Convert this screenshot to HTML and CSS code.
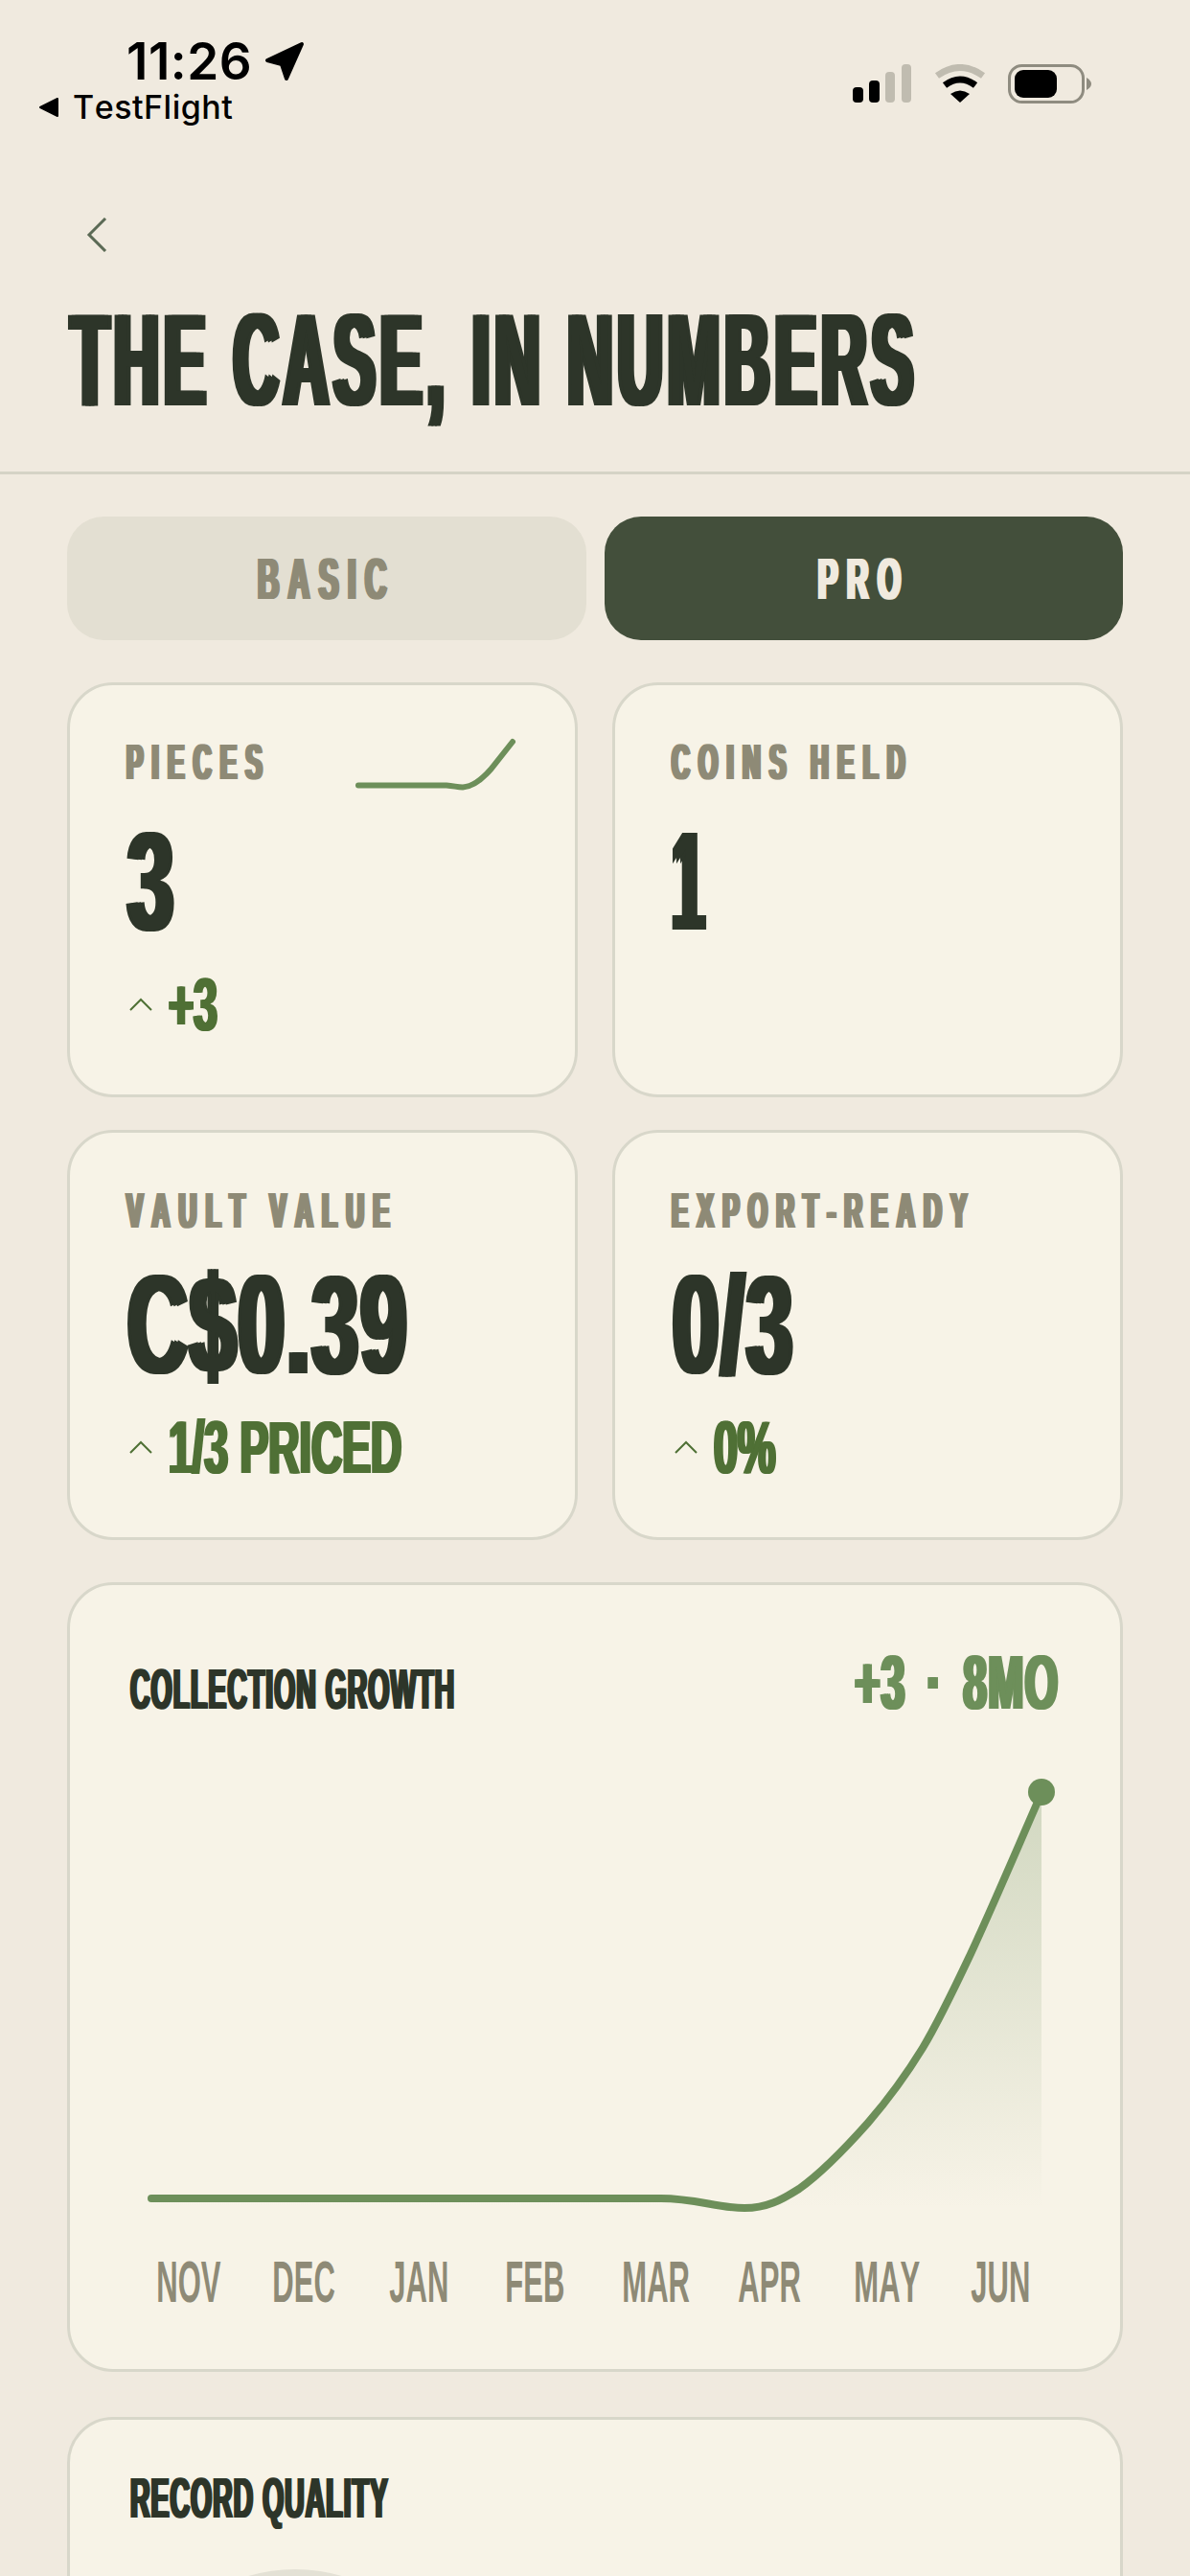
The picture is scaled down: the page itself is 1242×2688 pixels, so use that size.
FILE: index.html
```html
<!DOCTYPE html>
<html lang="en">

<head>
    <meta charset="UTF-8">
    <meta name="viewport" content="width=device-width, initial-scale=1.0">
    <title>The case, in numbers</title>
    <link rel="stylesheet" href="styles.css">
</head>

<body>
    <div class="status">
        <div class="status-left">
            <div class="clock">
                <span class="time">11:26</span>
                <svg class="arrow" width="42" height="42" viewBox="0 0 42 42">
                    <path d="M3 20 L39 3 L23 39 L18 24 Z" fill="#000" stroke="#000" stroke-width="4" stroke-linejoin="round" />
                </svg>
            </div>
            <div class="back-app">
                <svg width="22" height="22" viewBox="0 0 22 22">
                    <path d="M2 11 L20 2 V20 Z" fill="#000" stroke="#000" stroke-width="2" stroke-linejoin="round" />
                </svg>
                <span>TestFlight</span>
            </div>
        </div>
        <div class="status-right">
            <svg width="62" height="40" viewBox="0 0 62 40">
                <rect x="0" y="24" width="11" height="16" rx="4" fill="#000" />
                <rect x="17" y="17" width="11" height="23" rx="4" fill="#000" />
                <rect x="34" y="8" width="10" height="32" rx="4" fill="#c0bcb0" />
                <rect x="51" y="0" width="10" height="40" rx="4" fill="#c0bcb0" />
            </svg>
            <svg width="54" height="40" viewBox="0 0 54 40">
                <path d="M3 12 Q27 -5 51 12" fill="none" stroke="#c0bcb0" stroke-width="7" />
                <path d="M11 22 Q27 10 43 22" fill="none" stroke="#000" stroke-width="7" />
                <path d="M17 31 Q27 24 37 31 L27 40 Z" fill="#000" />
            </svg>
            <svg width="87" height="42" viewBox="0 0 87 42">
                <rect x="1.5" y="1.5" width="77" height="38" rx="13" fill="none" stroke="#8f8c80" stroke-width="3" />
                <rect x="7" y="6" width="44" height="29" rx="9" fill="#000" />
                <path d="M82 14 Q87 17 87 20.5 Q87 24 82 27 Z" fill="#8f8c80" />
            </svg>
        </div>
    </div>

    <header class="top">
        <svg class="back" width="22" height="36" viewBox="0 0 22 36">
            <path d="M20 1 L3 18 L20 35" fill="none" stroke="#5b6a55" stroke-width="3" />
        </svg>
        <h1 class="title">THE CASE, IN NUMBERS</h1>
    </header>

    <main class="content">
        <div class="tabs">
            <div class="tab"><span>BASIC</span></div>
            <div class="tab active"><span>PRO</span></div>
        </div>

        <div class="stats">
            <div class="card">
                <div class="label-row">
                    <div class="label">PIECES</div>
                    <svg class="spark" width="170" height="56" viewBox="370 770 170 56">
                        <path d="M374 819.5 H466 C474 820 477 821.5 483 821.5 C495 821 505 811 512 803 L535 774" fill="none" stroke="#6d8f5a" stroke-width="6" stroke-linecap="round" />
                    </svg>
                </div>
                <div class="value">3</div>
                <div class="delta">
                    <svg width="24" height="14" viewBox="0 0 24 14"><path d="M1 13 L12 2 L23 13" fill="none" stroke="#4f7035" stroke-width="2" /></svg>
                    <span>+3</span>
                </div>
            </div>
            <div class="card">
                <div class="label-row">
                    <div class="label">COINS HELD</div>
                </div>
                <div class="value one">1</div>
            </div>
            <div class="card low">
                <div class="label-row">
                    <div class="label">VAULT VALUE</div>
                </div>
                <div class="value">C$0.39</div>
                <div class="delta">
                    <svg width="24" height="14" viewBox="0 0 24 14"><path d="M1 13 L12 2 L23 13" fill="none" stroke="#4f7035" stroke-width="2" /></svg>
                    <span>1/3 PRICED</span>
                </div>
            </div>
            <div class="card low">
                <div class="label-row">
                    <div class="label">EXPORT-READY</div>
                </div>
                <div class="value">0/3</div>
                <div class="delta">
                    <svg width="24" height="14" viewBox="0 0 24 14"><path d="M1 13 L12 2 L23 13" fill="none" stroke="#4f7035" stroke-width="2" /></svg>
                    <span>0%</span>
                </div>
            </div>
        </div>

        <section class="panel chart">
            <div class="panel-head">
                <h2 class="panel-title">COLLECTION GROWTH</h2>
                <div class="trend"><span>+3 · 8MO</span></div>
            </div>
            <svg class="plot" width="970" height="470" viewBox="138 1850 970 470">
                <defs>
                    <linearGradient id="area" x1="0" y1="0" x2="0" y2="1">
                        <stop offset="0" stop-color="#6d8f5a" stop-opacity="0.27" />
                        <stop offset="1" stop-color="#6d8f5a" stop-opacity="0" />
                    </linearGradient>
                </defs>
                <path d="M158 2294 H690 C725 2294 750 2304 777 2304 C800 2304 815 2296 834 2284 C858 2267 882 2242 906 2215 C925 2193 944 2168 963 2137 C980 2109 996 2075 1013 2039 C1038 1985 1062 1928 1087 1871 V2304 H158 Z" fill="url(#area)" />
                <path d="M158 2294 H690 C725 2294 750 2304 777 2304 C800 2304 815 2296 834 2284 C858 2267 882 2242 906 2215 C925 2193 944 2168 963 2137 C980 2109 996 2075 1013 2039 C1038 1985 1062 1928 1087 1871" fill="none" stroke="#6d8f5a" stroke-width="8" stroke-linecap="round" />
                <circle cx="1087" cy="1870" r="14" fill="#6d8f5a" />
            </svg>
            <div class="months">
                <div>NOV</div>
                <div>DEC</div>
                <div>JAN</div>
                <div>FEB</div>
                <div>MAR</div>
                <div>APR</div>
                <div>MAY</div>
                <div>JUN</div>
            </div>
        </section>

        <section class="panel quality">
            <h2 class="panel-title">RECORD QUALITY</h2>
            <div class="ring"></div>
        </section>
    </main>
</body>

</html>
```

FILE: styles.css
```css
html,
body {
    margin: 0;
    height: 2688px;
    overflow: hidden;
}

body {
    width: 1242px;
    background: #f0eadf;
    color: #2d3529;
    font-family: "Liberation Sans", Arial, sans-serif;
    font-kerning: none;
}

h1,
h2 {
    margin: 0;
    font-weight: 700;
}

/* status bar */
.status {
    height: 190px;
    box-sizing: border-box;
    padding: 39px 103px 0 40px;
    display: flex;
    justify-content: space-between;
    align-items: flex-start;
    font-family: Inter, "Liberation Sans", sans-serif;
    color: #000;
}

.clock {
    display: flex;
    align-items: center;
    gap: 13px;
    margin-left: 92px;
    height: 50px;
}

.time {
    font-size: 53px;
    line-height: 50px;
    font-weight: 600;
    letter-spacing: 0.5px;
}

.back-app {
    display: flex;
    align-items: center;
    gap: 14px;
    margin-top: 3px;
    font-size: 34px;
    line-height: 40px;
    font-weight: 500;
    letter-spacing: 0.5px;
}

.status-right {
    display: flex;
    align-items: flex-start;
    gap: 23px;
    margin-top: 28px;
}

/* header */
.top {
    height: 305px;
    box-sizing: border-box;
    padding: 37px 0 0 70px;
    border-bottom: 3px solid #d5d3c6;
}

.back {
    display: block;
    margin-left: 20px;
}

.title {
    margin: 62px 0 0 4px;
    font-size: 138px;
    line-height: 100px;
    letter-spacing: 11.5px;
    word-spacing: 1px;
    white-space: nowrap;
    transform: scaleX(0.47);
    transform-origin: left;
    text-shadow: 8px 0 0 currentColor, -8px 0 0 currentColor;
}

.content {
    height: 2193px;
    box-sizing: border-box;
    padding: 44px 70px 0;
    overflow: hidden;
}

/* tabs */
.tabs {
    display: grid;
    grid-template-columns: 1fr 1fr;
    gap: 19px;
}

.tab {
    height: 129px;
    border-radius: 38px;
    background: #e3dfd2;
    color: #8e8a76;
    display: flex;
    justify-content: center;
    align-items: center;
    font-size: 62px;
    font-weight: 700;
    letter-spacing: 19px;
}

.tab span {
    display: inline-block;
    transform: scaleX(0.5);
    text-shadow: 4px 0 0 currentColor, -4px 0 0 currentColor;
}

.tab.active {
    background: #434f3b;
    color: #f0eadf;
}

/* stat cards */
.stats {
    display: grid;
    grid-template-columns: 533px 533px;
    grid-template-rows: 433px 428px;
    column-gap: 36px;
    row-gap: 34px;
    margin-top: 44px;
}

.card,
.panel {
    box-sizing: border-box;
    background: #f7f3e7;
    border: 3px solid #d8d7ca;
    border-radius: 48px;
}

.card {
    padding: 58px 0 0 58px;
}

.card.low {
    padding-top: 59px;
}

.label-row {
    display: flex;
    height: 44px;
}

.label {
    flex: 1;
    width: 0;
    margin-left: 1px;
    font-size: 52px;
    line-height: 44px;
    font-weight: 700;
    letter-spacing: 18.5px;
    white-space: nowrap;
    color: #8e8a76;
    transform: scaleX(0.5);
    transform-origin: left;
    text-shadow: 4px 0 0 currentColor, -4px 0 0 currentColor;
}

.spark {
    flex-shrink: 0;
    margin: -3px 60px 0 0;
}

.value {
    margin: 47px 0 0 2px;
    font-size: 147px;
    line-height: 110px;
    font-weight: 700;
    letter-spacing: 4px;
    white-space: nowrap;
    transform: scaleX(0.59);
    transform-origin: left;
    text-shadow: 6px 0 0 currentColor, -6px 0 0 currentColor;
}

.value.one {
    transform: scaleX(0.4);
    text-shadow: 10px 0 0 currentColor, -10px 0 0 currentColor;
}

.low .value {
    margin-top: 42px;
}

.delta {
    display: flex;
    align-items: center;
    margin-top: 44px;
    height: 60px;
    color: #4f7035;
}

.low .delta {
    margin-top: 43px;
}

.delta svg {
    flex-shrink: 0;
    margin: 0 17px 0 4px;
}

.delta span {
    font-size: 77px;
    line-height: 60px;
    font-weight: 700;
    white-space: nowrap;
    transform: scaleX(0.58);
    transform-origin: left;
    text-shadow: 3px 0 0 currentColor, -3px 0 0 currentColor;
}

/* chart */
.panel {
    margin-top: 44px;
}

.chart {
    height: 824px;
    padding: 57px 63px 0 63px;
}

.panel-head {
    display: flex;
    justify-content: space-between;
    align-items: baseline;
    height: 90px;
}

.panel-title {
    font-size: 60px;
    line-height: 50px;
    letter-spacing: 2px;
    white-space: nowrap;
    transform: scaleX(0.475);
    transform-origin: left;
    text-shadow: 3px 0 0 currentColor, -3px 0 0 currentColor;
}

.chart .panel-title {
    width: 0;
}

.trend {
    font-size: 80px;
    line-height: 90px;
    font-weight: 700;
    letter-spacing: 3px;
    word-spacing: 14px;
    white-space: nowrap;
    color: #6d8f5a;
    transform: scaleX(0.55);
    transform-origin: right;
    text-shadow: 4px 0 0 currentColor, -4px 0 0 currentColor;
}

.plot {
    display: block;
    margin: 49px 0 0 2px;
}

.months {
    display: grid;
    grid-template-columns: repeat(8, minmax(0, 1fr));
    width: 971px;
    margin: 36px 0 0 -3px;
    font-size: 62px;
    line-height: 50px;
    font-weight: 700;
    color: #8e8a76;
    text-align: center;
}

.months div {
    white-space: nowrap;
    transform: scaleX(0.5);
}

/* record quality */
.quality {
    height: 500px;
    margin-top: 47px;
    padding: 57px 63px 0;
}

.ring {
    box-sizing: border-box;
    width: 344px;
    height: 344px;
    margin-top: 49px;
    border: 44px solid #e3e1d5;
    border-radius: 50%;
}
```
